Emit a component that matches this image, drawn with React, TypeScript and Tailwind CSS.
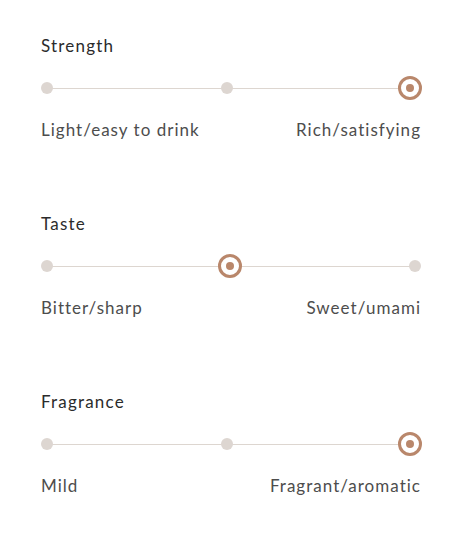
const scales = [
  { title: 'Strength', left: 'Light/easy to drink', right: 'Rich/satisfying', value: 2 },
  { title: 'Taste', left: 'Bitter/sharp', right: 'Sweet/umami', value: 1 },
  { title: 'Fragrance', left: 'Mild', right: 'Fragrant/aromatic', value: 2 },
];

// left offsets (px) of the small dots and the selected ring, per step
const dotLeft = ['left-0', 'left-[180px]', 'left-[368px]'];
const ringLeft = ['left-[-6px]', 'left-[177px]', 'left-[357px]'];

const Scale = ({ title, left, right, value }: (typeof scales)[number]) => (
  <section className="mb-[70px]">
    <h3 className="text-[17px] leading-6 font-normal tracking-[0.07em] text-[#2b2b2b]">{title}</h3>
    <div className="relative mt-[17px] h-[26px]">
      <div className="absolute left-[5px] right-[6px] top-1/2 h-px bg-[#ddd6d0]" />
      {dotLeft.map((pos, i) =>
        i === value ? null : (
          <span
            key={i}
            className={`absolute top-1/2 -translate-y-1/2 ${pos} h-3 w-3 rounded-full bg-[#ddd6d1]`}
          />
        )
      )}
      <span
        className={`absolute top-1/2 -translate-y-1/2 ${ringLeft[value]} flex h-6 w-6 items-center justify-center rounded-full border-[3px] border-[#b9876b] bg-white`}
      >
        <span className="h-2 w-2 rounded-full bg-[#b9876b]" />
      </span>
    </div>
    <div className="mt-[17px] flex justify-between text-[17px] leading-6 tracking-[0.06em] text-[#4d4d4d]">
      <span>{left}</span>
      <span>{right}</span>
    </div>
  </section>
);

export default function App() {
  return (
    <main className="min-h-screen bg-white pt-[34px] pl-[41px] font-['Lato',sans-serif]">
      <div className="w-[380px]">
        {scales.map((s) => (
          <Scale key={s.title} {...s} />
        ))}
      </div>
    </main>
  );
}
